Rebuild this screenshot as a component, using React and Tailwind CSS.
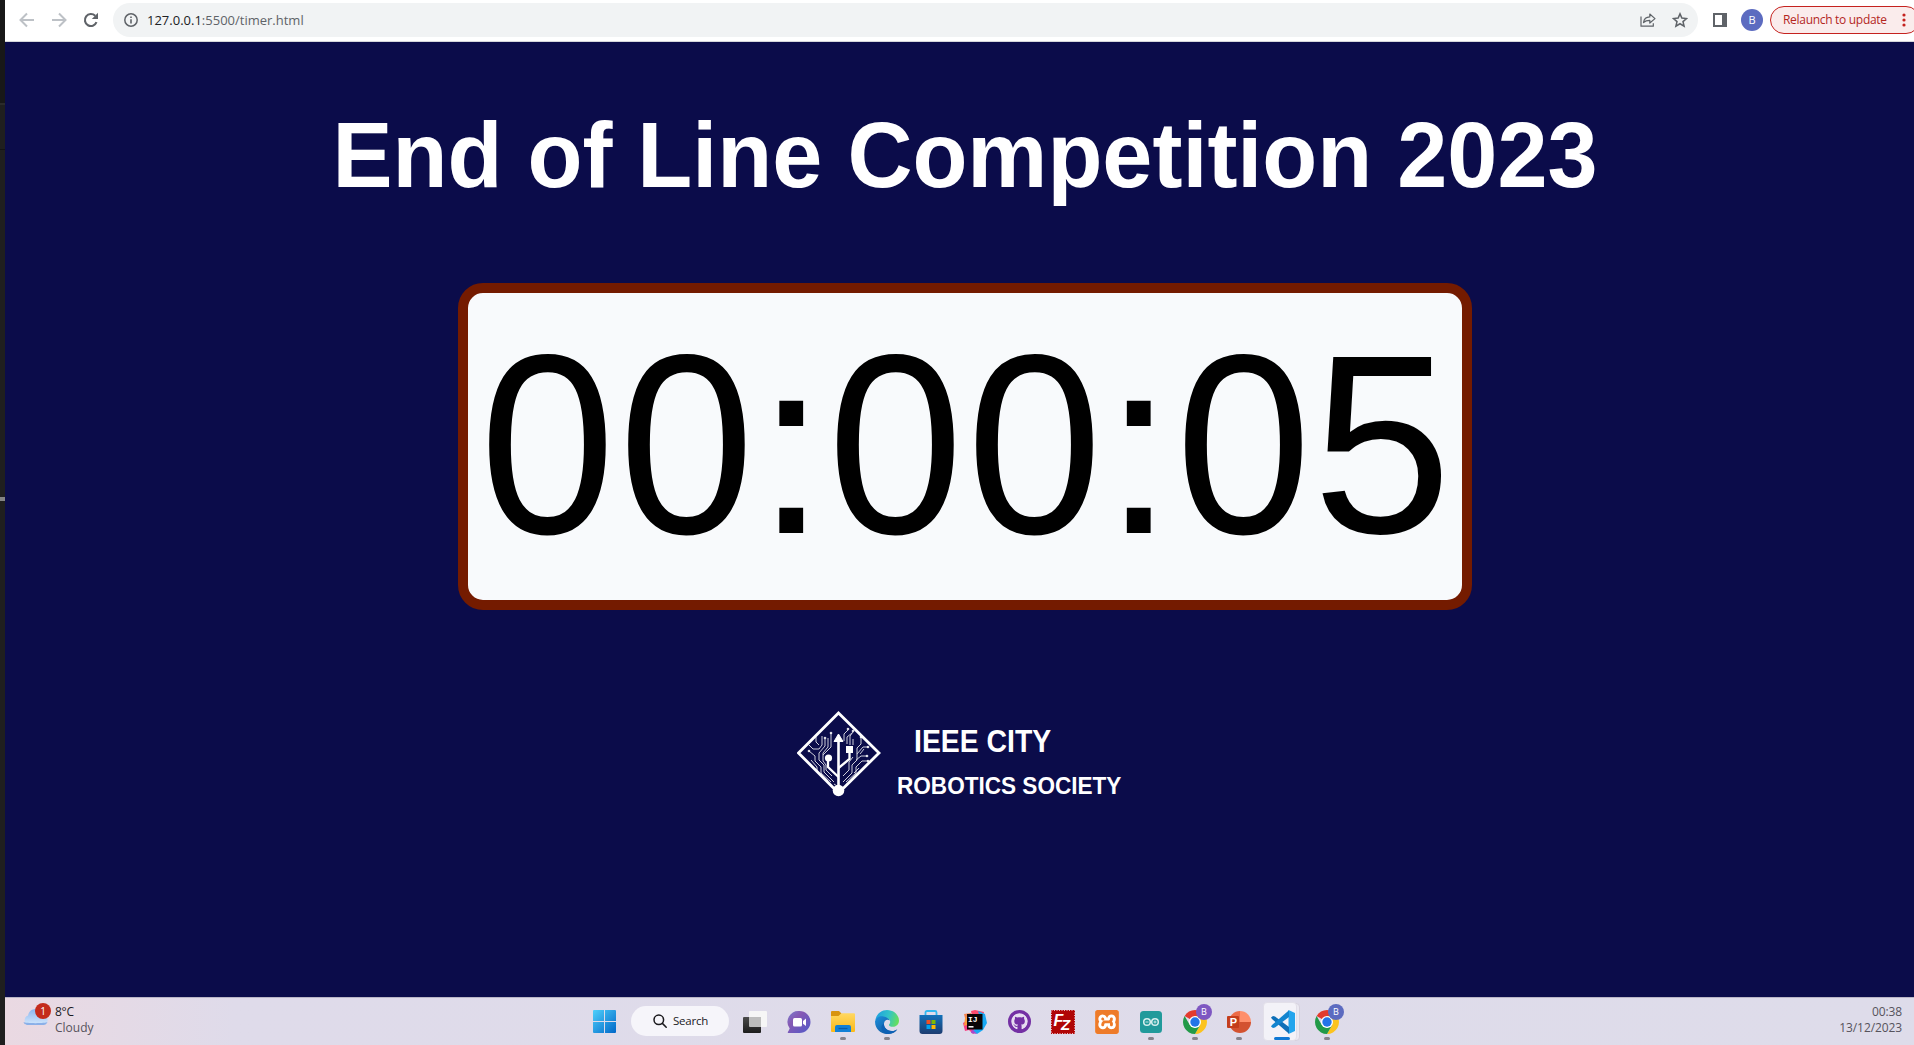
import React from "react";
import { SiXampp } from "react-icons/si";
import { FaGithub } from "react-icons/fa";

const UI = "font-['Open_Sans','Noto_Sans',sans-serif]";

function Toolbar() {
  return (
    <div className={`flex h-[42px] shrink-0 items-start border-b border-[#d5d7db] bg-white pl-[13px] ${UI}`}>
      <svg className="mt-[12px] h-4 w-[18px] shrink-0" viewBox="0 0 18 16" fill="none" stroke="#bdc1c6" strokeWidth="2">
        <path d="M16 8H3.5M9 1.5 2.5 8 9 14.5" />
      </svg>
      <svg className="mt-[12px] ml-[14px] h-4 w-[18px] shrink-0" viewBox="0 0 18 16" fill="none" stroke="#bdc1c6" strokeWidth="2">
        <path d="M2 8h12.5M9 1.5 15.5 8 9 14.5" />
      </svg>
      <svg className="mt-[12px] ml-[15px] h-4 w-4 shrink-0" viewBox="0 0 16 16" fill="none" stroke="#5f6368" strokeWidth="2.1">
        <path d="M13.5 10.2A6 6 0 1 1 12.2 3.8" />
        <path d="M15 .8V7H8.8Z" fill="#5f6368" stroke="none" />
      </svg>
      <div className="mt-[3px] ml-[14px] flex h-[34px] w-[1585px] shrink-0 items-center rounded-full bg-[#f1f3f4] pl-[11px]">
        <svg className="h-[14px] w-[14px]" viewBox="0 0 14 14" fill="none" stroke="#5f6368" strokeWidth="1.5">
          <circle cx="7" cy="7" r="6.2" />
          <path d="M7 6.2v4.3M7 3.4v1.6" strokeWidth="1.6" />
        </svg>
        <div className="mt-px ml-[9px] text-[13px] leading-none whitespace-nowrap text-[#5f6368]">
          <span className="text-[#202124]">127.0.0.1</span>:5500/timer.html
        </div>
        <svg className="ml-auto h-[14px] w-[16px]" viewBox="0 0 16 14" fill="none" stroke="#5f6368" strokeWidth="1.2" strokeLinejoin="round">
          <path d="M1 3.5v9.7h12.3v-3" />
          <path d="M3.5 9.5C4 6 6.5 4 9.8 3.9V1L15 5.6 9.8 10V7.3C7 7.3 5 8 3.5 9.5Z" />
        </svg>
        <svg className="mr-[10px] ml-[16px] h-4 w-4" viewBox="0 0 24 24" fill="none" stroke="#5f6368" strokeWidth="2.3">
          <path d="m12 2.8 2.8 6.4 7 .6-5.3 4.6 1.6 6.8-6.1-3.6-6.1 3.6 1.6-6.8L2.2 9.8l7-.6Z" />
        </svg>
      </div>
      <div className="mt-[13px] ml-[15px] flex h-[14px] w-[14px] shrink-0 border-2 border-r-[5px] border-[#5f6368]" />
      <div className="mt-[9px] ml-[14px] flex h-[22px] w-[22px] shrink-0 items-center justify-center rounded-full bg-[#5c6bc0] text-[11px] text-white">B</div>
      <div className="mt-[6px] ml-[7px] flex h-7 w-[150px] shrink-0 items-center rounded-full border border-[#c5221f] bg-[#faecec] pl-[12px] text-[12px] whitespace-nowrap text-[#b3261e]">
        <span className="tracking-[-0.3px]">Relaunch to update</span>
        <svg className="ml-[15px] h-[14px] w-1" viewBox="0 0 4 14" fill="#c5221f">
          <circle cx="2" cy="2" r="1.6" />
          <circle cx="2" cy="7" r="1.6" />
          <circle cx="2" cy="12" r="1.6" />
        </svg>
      </div>
    </div>
  );
}

function SocietyMark() {
  return (
    <svg className="h-[86px] w-[84px] shrink-0" viewBox="0 0 84 86" fill="none" stroke="#fff">
      <path d="M41.5 2 82 42 41.5 82 1.5 42Z" strokeWidth="2.8" />
      <path d="M41.5 76V28" strokeWidth="2.6" />
      <path d="M41.5 23 46 30.5h-9Z" fill="#fff" strokeWidth="1" />
      <path d="M41.5 66 31 56V47M41.5 57l11-9V38" strokeWidth="2.3" />
      <circle cx="31.5" cy="47" r="3.6" fill="#fff" stroke="none" />
      <rect x="49" y="35" width="7" height="7" fill="#fff" stroke="none" />
      <circle cx="41.5" cy="79.5" r="5.8" fill="#fff" stroke="none" />
      <g strokeWidth="1" opacity=".8">
        <path d="M37 71 27 61V54l-5-5v-7l6-7v-7M34 71 24 62v-6l-6-6v-5l-6-5M31 70 20 60v-4l-6-7M35 65l-6-6v-5l-3-4v-8l5-6v-9M12 34l4 4h6l3-4v-9M26 44l8-8V22M22 34l-3-3v-5M40 75l-3-2" />
        <path d="M46 71l9-9v-8l5-5v-6l6-7h5M49 71l10-9v-6l6-6h6M46 65l6-6v-8l4-5M60 43v-6l4-4v-7M63 43l4-5M57 62l5-5M47 30v-7l4-4M50 33v-7l5-4M53 34v-9l3-4M56 34v-6M59 49l5-4h6" />
      </g>
      <g fill="#fff" stroke="none" opacity=".85">
        <circle cx="12" cy="40" r="1.3" /><circle cx="28" cy="27" r="1.3" /><circle cx="34" cy="22" r="1.3" />
        <circle cx="51" cy="18" r="1.3" /><circle cx="56" cy="20" r="1.3" /><circle cx="71" cy="36" r="1.3" />
        <circle cx="70" cy="45" r="1.3" /><circle cx="64" cy="26" r="1.3" /><circle cx="71" cy="50" r="1.3" />
      </g>
    </svg>
  );
}

function Zeros({ children }) {
  return [...children].map((digit, i) => (
    <span key={i} className="inline-block origin-[48%_80%] scale-x-[0.975] scale-y-[1.025]">{digit}</span>
  ));
}

function TimerPage() {
  return (
    <main className="flex w-[1920px] flex-1 flex-col items-center bg-[#0b0c4a] font-['Liberation_Sans',Arial,sans-serif]">
      <h1 className="mt-[63px] h-[103px] origin-[50%_80%] scale-y-[1.035] text-[90px] leading-[103px] font-bold whitespace-nowrap text-white">End of Line Competition 2023</h1>
      <div className="mt-[75px] h-[327px] rounded-[25px] border-[10px] border-[#741b00] bg-[#f8fafc] p-[10px] text-[250px] leading-[287px] whitespace-nowrap text-black">
        <Zeros>00</Zeros>:<Zeros>00</Zeros>:<Zeros>0</Zeros><span className="inline-block origin-[50%_80%] scale-y-[1.02]">5</span>
      </div>
      <div className="mt-[101px] flex w-[334px] self-start ml-[792px] text-white font-bold">
        <SocietyMark />
        <div className="flex flex-col pl-[12px] whitespace-nowrap">
          <span className="mt-[14px] ml-[21px] origin-left scale-x-[0.915] text-[31px] leading-[34px]">IEEE CITY</span>
          <span className="mt-[13px] ml-[4px] origin-left scale-x-[0.94] text-[24px] leading-[28px]">ROBOTICS SOCIETY</span>
        </div>
      </div>
    </main>
  );
}

function Cell({ children, running }) {
  return (
    <div className="relative flex h-[47px] w-11 shrink-0 items-center justify-center">
      {children}
      {running && <span className="absolute bottom-[5px] left-[19px] h-[3px] w-[6px] rounded-full bg-[#85838c]" />}
    </div>
  );
}

function Chrome({ badge }) {
  return (
    <>
      <svg className="h-6 w-6" viewBox="0 0 24 24">
        <path d="M12 12 1.61 6A12 12 0 0 1 22.39 6Z" fill="#e33b2e" />
        <path d="M12 6h10.39A12 12 0 0 1 12 24l5.2-9Z" fill="#fcc31e" />
        <path d="M1.61 6 6.8 15 12 18l5.2-3L12 24A12 12 0 0 1 1.61 6Z" fill="#229a48" />
        <circle cx="12" cy="12" r="6" fill="#fff" />
        <circle cx="12" cy="12" r="4.7" fill="#2374e8" />
      </svg>
      {badge === "violet" ? (
        <span className="absolute top-[6px] left-[23px] flex h-4 w-4 items-center justify-center rounded-full bg-[#7e57c2] text-[9px] text-white">B</span>
      ) : (
        <span className="absolute top-[6px] left-[23px] flex h-4 w-4 items-center justify-center rounded-full bg-[#5c6bc0] text-[9px] text-white">B</span>
      )}
    </>
  );
}

function Taskbar() {
  return (
    <footer className={`flex h-[48px] w-[1909px] shrink-0 overflow-hidden border-t border-[#b9b5c6] bg-linear-to-r from-[#ead9e2] via-[#dfdbea] via-12% to-[#dedcea] ${UI}`}>
      <div className="relative flex w-[576px] pl-[17px]">
        <svg className="mt-[10px] h-[18px] w-[26px]" viewBox="0 0 26 18">
          <defs>
            <linearGradient id="cloud" x1="0" y1="0" x2="0" y2="1">
              <stop offset="0" stopColor="#8cb6ee" />
              <stop offset="1" stopColor="#d3e8fd" />
            </linearGradient>
          </defs>
          <path d="M6 17a5 5 0 0 1 0-9.5C7 3 10 1 14 1c5 0 8 3 8 7 6 1 4 9-1 9Z" fill="url(#cloud)" />
          <path d="M1.5 14c1 3 3 3 5 3h15c2 0 3-1 4-3-2 1.5-22 1.5-24 0Z" fill="#8bb0e8" />
        </svg>
        <span className="absolute top-[5px] left-[30px] flex h-4 w-4 items-center justify-center rounded-full bg-[#c42b1c] text-[10px] leading-none text-white">1</span>
        <div className="mt-[6px] ml-[7px] text-[12px] leading-[16px]">
          <div className="tracking-[-0.3px] text-[#1b1a1e]">8°C</div>
          <div className="text-[#56535c]">Cloudy</div>
        </div>
      </div>
      <div className="flex w-[50px] items-center justify-center">
        <svg className="mr-[4px] h-[23px] w-[23px]" viewBox="0 0 23 23">
          <defs>
            <linearGradient id="win" x1="0" y1="0" x2="1" y2="1">
              <stop offset="0" stopColor="#4fd0fb" />
              <stop offset="1" stopColor="#0067c8" />
            </linearGradient>
          </defs>
          <path d="M1 0h10v11H0V1a1 1 0 0 1 1-1ZM12 0h10a1 1 0 0 1 1 1v10H12ZM0 12h11v11H1a1 1 0 0 1-1-1ZM12 12h11v10a1 1 0 0 1-1 1H12Z" fill="url(#win)" />
        </svg>
      </div>
      <div className="mt-[8px] flex h-[30px] w-[98px] shrink-0 items-center rounded-full bg-[#f6f5fa] pl-[22px] text-[11.5px] text-[#1b1a1e]">
        <svg className="h-[14px] w-[14px]" viewBox="0 0 14 14" fill="none" stroke="#1b1a1e" strokeWidth="1.5" strokeLinecap="round">
          <circle cx="5.8" cy="5.8" r="4.8" />
          <path d="m9.4 9.4 3.8 3.8" />
        </svg>
        <span className="ml-[6px] tracking-[-0.2px]">Search</span>
      </div>
      <div className="ml-[4px] flex">
        <Cell>
          <svg className="h-6 w-6" viewBox="0 0 24 24">
            <defs>
              <linearGradient id="tv" x1="0" y1="0" x2="0" y2="1"><stop offset="0" stopColor="#4a4a4a" /><stop offset="1" stopColor="#1c1c1c" /></linearGradient>
            </defs>
            <rect x="6" y="1" width="18" height="16" rx="1" fill="#f6f6f6" />
            <rect x="0" y="7" width="18" height="16" rx="1" fill="url(#tv)" />
            <path d="M6 7h12v10H7a1 1 0 0 1-1-1Z" fill="#bdbdbd" />
          </svg>
        </Cell>
        <Cell>
          <svg className="h-6 w-6" viewBox="0 0 24 24">
            <defs><linearGradient id="chat" x1="0" y1="0" x2="1" y2="1"><stop offset="0" stopColor="#7a7fce" /><stop offset=".35" stopColor="#8659b4" /><stop offset="1" stopColor="#5059c9" /></linearGradient></defs>
            <path d="M12.5 1a11 11 0 1 1 0 22H1.5c-1 0-1-1 0-2l1.2-2.5A11 11 0 0 1 12.5 1Z" fill="url(#chat)" />
            <rect x="6" y="8" width="9" height="8.5" rx="1.5" fill="#fff" />
            <path d="m16 11 3-2.5v7.5L16 13.8Z" fill="#fff" />
          </svg>
        </Cell>
        <Cell running>
          <svg className="h-6 w-6" viewBox="0 0 24 24">
            <defs><linearGradient id="folder" x1="0" y1="0" x2="0" y2="1"><stop offset="0" stopColor="#ffd862" /><stop offset="1" stopColor="#fbb917" /></linearGradient></defs>
            <path d="M0 2a1 1 0 0 1 1-1h7l2.5 2.5L8 7H0Z" fill="#d89410" />
            <path d="M0 6h7.5l3-2.8H23a1 1 0 0 1 1 1V21a1 1 0 0 1-1 1H1a1 1 0 0 1-1-1Z" fill="url(#folder)" />
            <path d="M4 22v-5a2 2 0 0 1 2-2h12a2 2 0 0 1 2 2v5Z" fill="#1180d6" />
            <path d="M7.5 18.5h9" stroke="#0a5ca8" strokeWidth="1.3" />
          </svg>
        </Cell>
        <Cell running>
          <svg className="h-6 w-6" viewBox="0 0 24 24">
            <defs>
              <linearGradient id="edge1" x1="0" y1=".3" x2="1" y2=".5"><stop offset="0" stopColor="#1e9fe0" /><stop offset=".55" stopColor="#32c3c8" /><stop offset="1" stopColor="#67df5a" /></linearGradient>
              <linearGradient id="edge2" x1="0" y1="0" x2="1" y2="1"><stop offset="0" stopColor="#1b8fdc" /><stop offset="1" stopColor="#104a92" /></linearGradient>
            </defs>
            <path d="M.3 10C1.5 4 6.3 0 12 0c6.8 0 12 5 12 10.5 0 4-3 6.3-6.2 6.3-2.5 0-4-1-3.8-2 .1-.6 1.2-1.2 1.2-3C15.2 9.5 12.5 8 9.5 8 5.5 8 1.5 9 .3 10Z" fill="url(#edge1)" />
            <path d="M.1 11C2 6.5 6 6 8.5 6.5c3 .5 5.5 2 6 4C12.5 9 9.5 10 9 13.5c-.5 4 3.5 7.5 8 7.5 2 0 4-.7 5.3-1.8C20 22.5 16 24 12 24 5.5 24-.5 18.5.1 11Z" fill="url(#edge2)" />
            <path d="M9 13.5C8.5 18 12.5 21 17 21c2.5 0 4.5-1 5.3-1.8C20 23 16 24 12 24c-5-1-8-8-3-10.5Z" fill="#0d61b5" />
          </svg>
        </Cell>
        <Cell>
          <svg className="h-6 w-6" viewBox="0 0 24 24">
            <defs><linearGradient id="store" x1="0" y1="0" x2="0" y2="1"><stop offset="0" stopColor="#1272bb" /><stop offset="1" stopColor="#1d3c70" /></linearGradient></defs>
            <path d="M6.5 6V2.5A1.5 1.5 0 0 1 8 1h8a1.5 1.5 0 0 1 1.5 1.5V6" fill="none" stroke="#31b8f0" strokeWidth="1.8" />
            <path d="M.5 5h23v16a3 3 0 0 1-3 3h-17a3 3 0 0 1-3-3Z" fill="url(#store)" />
            <path d="M7.5 10h4v4h-4Z" fill="#f25022" /><path d="M12.5 10h4v4h-4Z" fill="#7fba00" />
            <path d="M7.5 15h4v4h-4Z" fill="#00a4ef" /><path d="M12.5 15h4v4h-4Z" fill="#ffb900" />
          </svg>
        </Cell>
        <Cell>
          <svg className="h-6 w-6" viewBox="0 0 24 24">
            <path d="M1 4 8 3v9H3Z" fill="#f5854f" /><path d="M0 13l5-3 8 12-3 2-4-4-4 1Z" fill="#f93f82" />
            <path d="m8 1 4-1 9 2-2 8-10-4Z" fill="#fb4a6d" /><path d="m15 1 7 3 2 9-4 7-6 4-4-3L18 12Z" fill="#18a8f3" />
            <path d="m2 8 3-2 1 8-5 2Z" fill="#fd9b3c" /><path d="m9 19 5 5-6-1Z" fill="#a349d0" />
            <rect x="4" y="4" width="15.5" height="15.5" fill="#090405" />
            <text x="5" y="12" fontFamily="Liberation Mono" fontWeight="700" fontSize="8" fill="#fff">IJ</text>
            <path d="M5.5 16.8h5" stroke="#fff" strokeWidth="1.5" />
          </svg>
        </Cell>
        <Cell>
          <span className="flex h-[23px] w-[23px] items-center justify-center rounded-full border-[3px] border-[#7430a4] bg-[#7430a4]">
            <FaGithub className="rounded-full bg-[#7430a4] text-[#e6dcf0]" size={17} />
          </span>
        </Cell>
        <Cell>
          <svg className="h-6 w-6" viewBox="0 0 24 24">
            <rect width="24" height="24" fill="#b00606" />
            <rect x=".5" y=".5" width="23" height="23" fill="none" stroke="#e7b9c0" strokeDasharray="1 1.5" />
            <text x="2.5" y="15.5" fontFamily="Liberation Sans" fontStyle="italic" fontWeight="700" fontSize="16" fill="#fff">F</text>
            <text x="10" y="20" fontFamily="Liberation Sans" fontStyle="italic" fontWeight="700" fontSize="15" fill="#fff">Z</text>
          </svg>
        </Cell>
        <Cell>
          <span className="flex h-6 w-6 items-center justify-center rounded-[3px] bg-white">
            <SiXampp size={24} className="text-[#ee7b29]" />
          </span>
        </Cell>
        <Cell running>
          <svg className="h-[22px] w-[22px]" viewBox="0 0 22 22">
            <rect width="22" height="22" rx="3.5" fill="#219a9b" />
            <g fill="none" stroke="#d8efee" strokeWidth="1.5"><circle cx="7" cy="11" r="3.3" /><circle cx="15" cy="11" r="3.3" /><path d="M5.5 11h3M13.5 11h3M15 9.5v3" strokeWidth=".9" /></g>
          </svg>
        </Cell>
        <Cell running><Chrome badge="violet" /></Cell>
        <Cell running>
          <svg className="h-6 w-6" viewBox="0 0 24 24">
            <path d="M13 1a11 11 0 0 0-11 11h11Z" fill="#ed6c47" /><path d="M13 1a11 11 0 0 1 11 11H13Z" fill="#ff8f6b" />
            <path d="M2 12h22a11 11 0 0 1-22 0Z" fill="#d35230" />
            <rect x="0" y="6" width="12" height="12" rx="1" fill="#c43e1c" />
            <text x="2.8" y="16" fontFamily="Liberation Sans" fontWeight="700" fontSize="11" fill="#fff">P</text>
          </svg>
        </Cell>
        <Cell>
          <span className="absolute top-[5px] left-[8px] h-[38px] w-[31px] rounded-[4px] border border-[#d6d2de] bg-[#ebe9f2]" />
          <span className="absolute top-[4px] left-[2px] h-[39px] w-[34px] rounded-[4px] border border-[#e2dfe9] bg-[#f3f2f8]" />
          <svg className="relative h-6 w-6" viewBox="0 0 24 24">
            <path d="M17.5 0 24 3v18l-6.5 3Z" fill="#24a5ed" />
            <path d="M0 7.5 2 6l2 .5L18 17v6.8L1 9Z" fill="#0d6fb8" />
            <path d="M0 16.5 2 18l2-.5L18 7V.2L1 15Z" fill="#1284cf" />
          </svg>
          <span className="absolute bottom-[5px] left-[13px] h-[3px] w-4 rounded-full bg-[#0f78d4]" />
        </Cell>
        <Cell running><Chrome badge="indigo" /></Cell>
      </div>
      <div className="mt-[6px] mr-[12px] ml-auto text-right text-[12px] leading-[16px] tracking-[-0.1px] text-[#56535c]">
        <div>00:38</div>
        <div>13/12/2023</div>
      </div>
    </footer>
  );
}

export default function App() {
  return (
    <div className="flex h-[1045px] w-[1914px] overflow-hidden bg-[#1f1f1f]">
      <div className="flex w-[5px] shrink-0 flex-col">
        <div className="h-[103px] bg-[#181818]" />
        <div className="h-[2px] bg-[#2b2b2b]" />
        <div className="mt-[44px] h-px bg-[#141414]" />
        <div className="mt-[347px] h-1 bg-[#858585]" />
      </div>
      <div className="flex w-[1909px] shrink-0 flex-col overflow-hidden">
        <Toolbar />
        <TimerPage />
        <Taskbar />
      </div>
    </div>
  );
}
